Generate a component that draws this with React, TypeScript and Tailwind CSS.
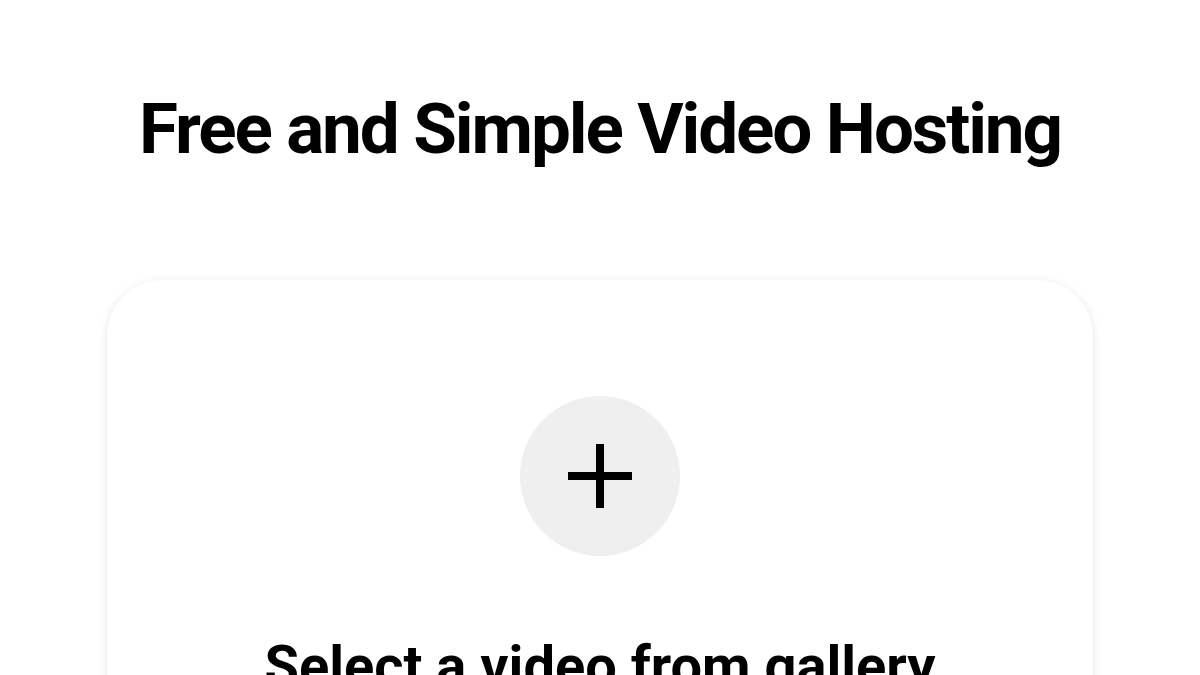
import React from "react";

const App: React.FC = () => {
  return (
    <div
      className="min-h-screen w-full bg-white overflow-hidden flex flex-col items-center"
      style={{ fontFamily: "Roboto, 'Noto Sans', sans-serif" }}
    >
      <h1 className="pt-[93px] text-[71px] leading-none font-bold text-black tracking-[-2.1px] whitespace-nowrap">
        Free and Simple Video Hosting
      </h1>

      <div className="mt-[116px] w-[986px] rounded-[56px] bg-white shadow-[0_2px_10px_rgba(0,0,0,0.10)] flex flex-col items-center pt-[116px] pb-16">
        <button className="w-40 h-40 rounded-full bg-[#efefef] flex items-center justify-center">
          <svg width="64" height="64" viewBox="0 0 64 64">
            <path d="M32 0v64M0 32h64" stroke="#000000" strokeWidth="8" />
          </svg>
        </button>
        <p className="mt-[82px] text-[56px] leading-none font-bold text-black whitespace-nowrap">
          Select a video from gallery
        </p>
      </div>
    </div>
  );
};

export default App;
